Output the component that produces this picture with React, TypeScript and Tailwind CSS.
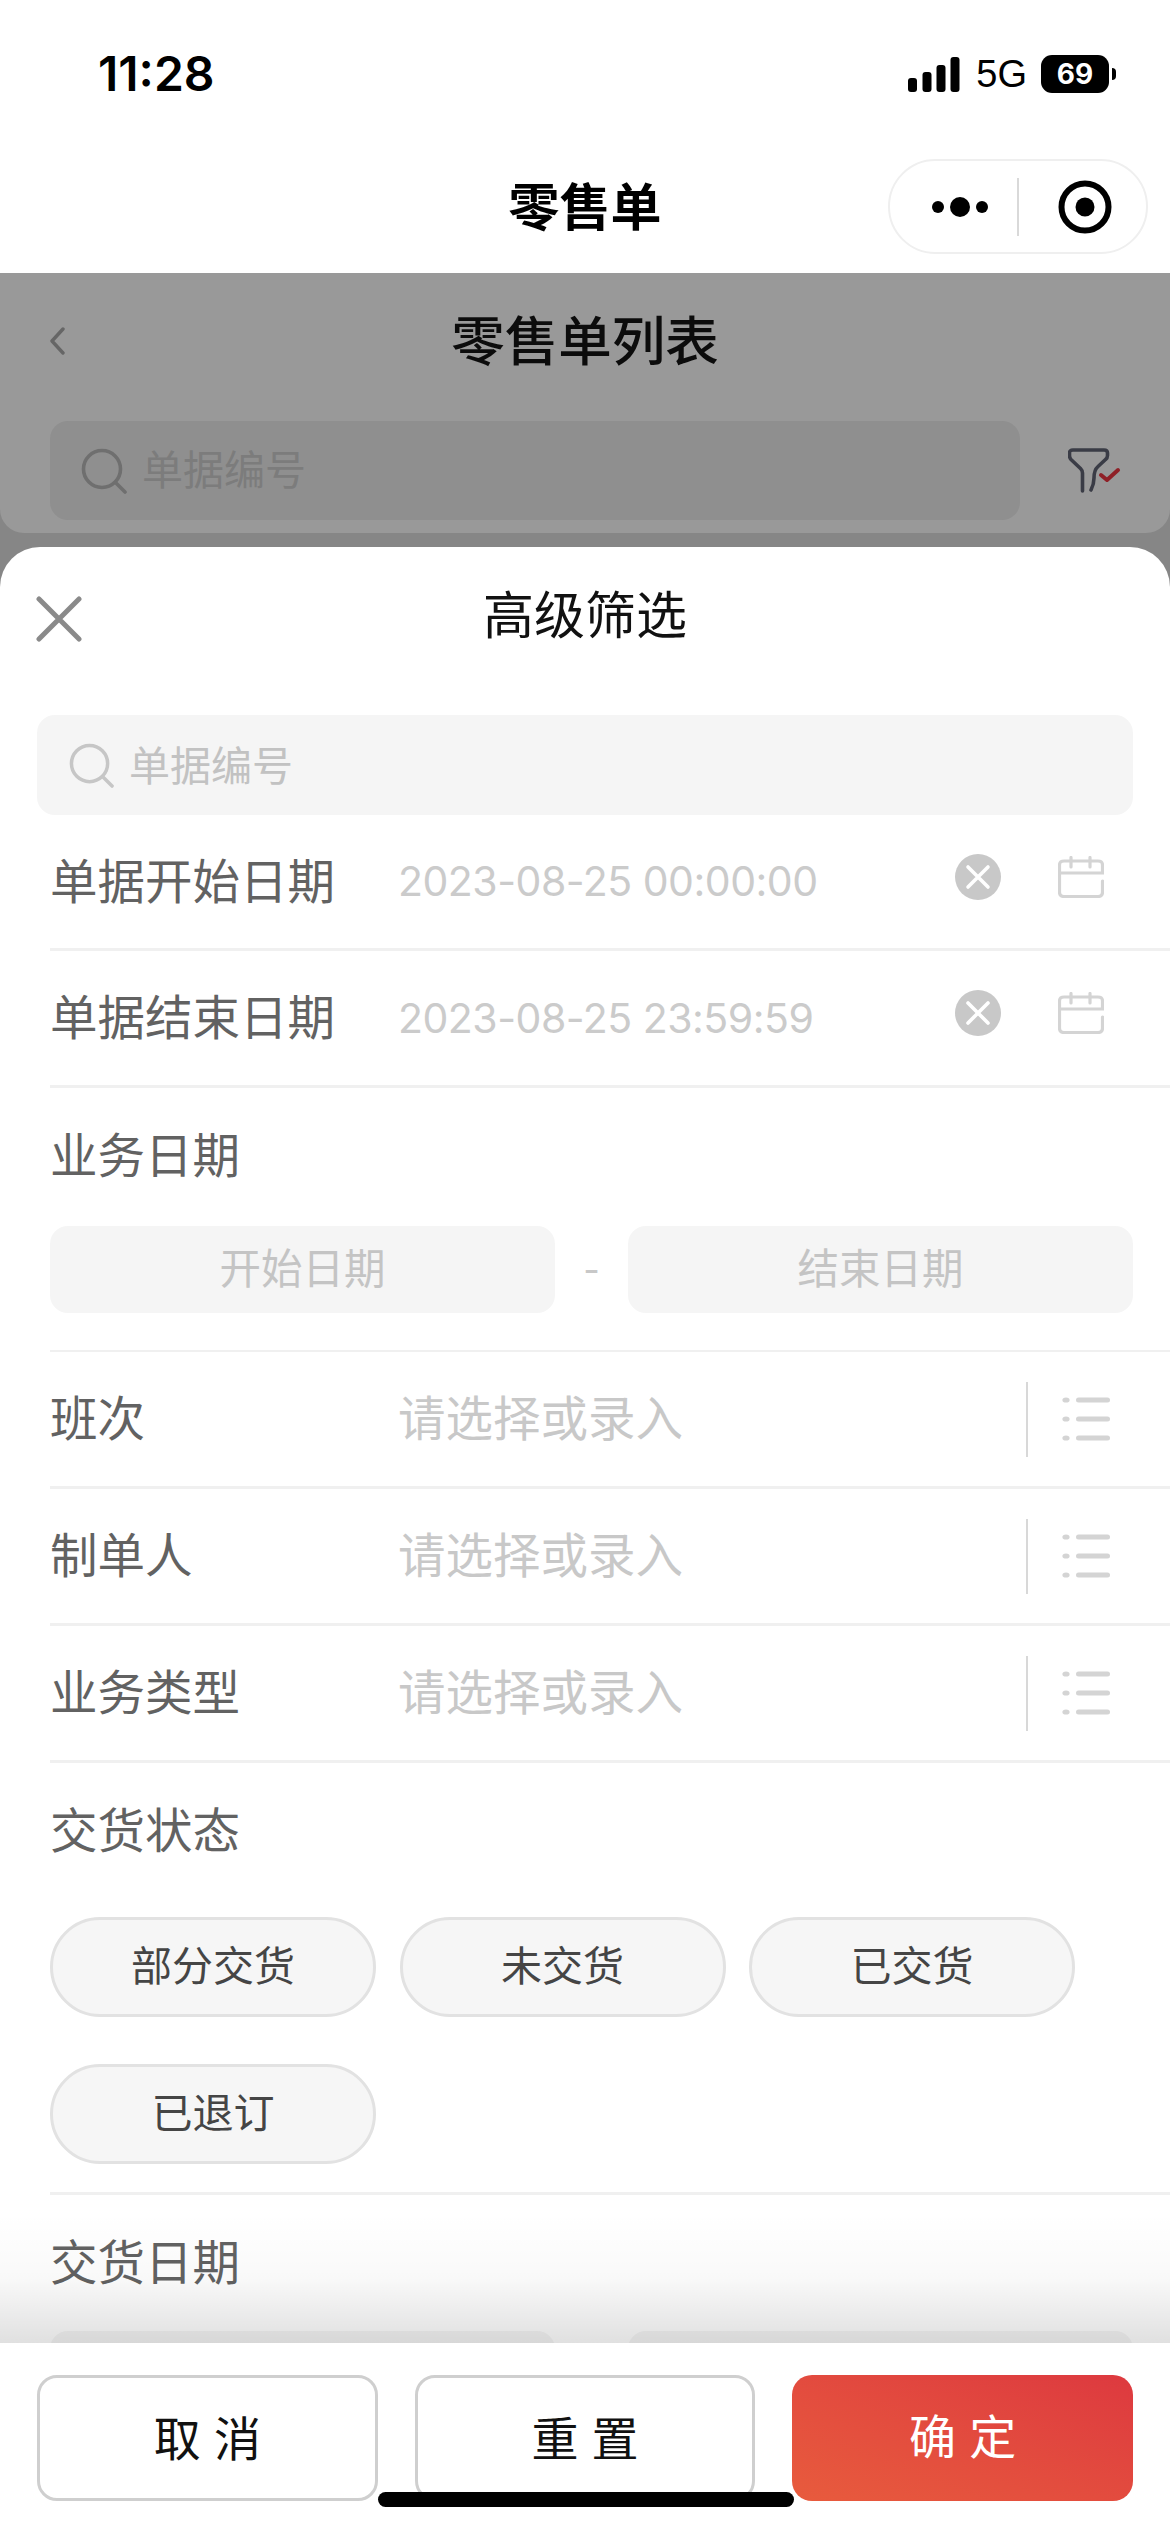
import React from 'react'

const FONT = "font-['Inter','Noto_Sans_CJK_SC','Noto_Sans',sans-serif]"

function SearchIcon({ color, size }: { color: string; size: number }) {
  return (
    <svg width={size} height={size} viewBox="0 0 46 46" fill="none" stroke={color} strokeWidth="3.6" strokeLinecap="round">
      <circle cx="21" cy="21" r="18.5" />
      <path d="M34.5 34.5 L44 44" />
    </svg>
  )
}

function ClearIcon() {
  return (
    <svg width="46" height="46" viewBox="0 0 46 46" className="mb-[10px]">
      <circle cx="23" cy="23" r="23" fill="#c8c8c8" />
      <path d="M13 13 L33 33 M33 13 L13 33" stroke="#fff" strokeWidth="3.6" strokeLinecap="round" />
    </svg>
  )
}

function CalendarIcon() {
  return (
    <svg width="46" height="42" viewBox="0 0 46 42" fill="none" stroke="#d4d4d4" strokeWidth="3.2" strokeLinecap="round" className="mb-[10px]">
      <path d="M44.5 25 V36 Q44.5 40.5 40 40.5 H6 Q1.5 40.5 1.5 36 V9 Q1.5 5 6 5 H40 Q44.5 5 44.5 9 V17 H1.5" />
      <path d="M13 1.5 V11 M32 1.5 V11" />
    </svg>
  )
}

function ListIcon() {
  return (
    <svg width="48" height="44" viewBox="0 0 48 44" fill="#d4d4d4">
      <ellipse cx="4" cy="3" rx="3.6" ry="2.6" />
      <ellipse cx="4" cy="22" rx="3.6" ry="2.6" />
      <ellipse cx="4" cy="41" rx="3.6" ry="2.6" />
      <rect x="14" y="0.5" width="34" height="5" rx="2.5" />
      <rect x="14" y="19.5" width="34" height="5" rx="2.5" />
      <rect x="14" y="38.5" width="34" height="5" rx="2.5" />
    </svg>
  )
}

function DateRow({ label, value, tall }: { label: string; value: string; tall?: boolean }) {
  return (
    <div className={`flex items-center border-b-[3px] border-[#f0f0f0] ml-[50px] pr-[66px] ${tall ? 'h-[137px]' : 'h-[136px]'}`}>
      <span className="w-[348px] text-[47.5px] leading-none text-[#626262]">{label}</span>
      <span className="flex-1 text-[41px] leading-none tracking-[-0.5px] text-[#cbcbcb]">{value}</span>
      <ClearIcon />
      <span className="ml-[57px] flex">
        <CalendarIcon />
      </span>
    </div>
  )
}

function SelectRow({ label }: { label: string }) {
  return (
    <div className="flex h-[137px] items-center border-b-[3px] border-[#f0f0f0] ml-[50px] pr-[60px]">
      <span className="w-[348px] text-[47.5px] leading-none text-[#626262]">{label}</span>
      <span className="flex-1 text-[47.5px] leading-none text-[#c8c8c8]">请选择或录入</span>
      <span className="h-[75px] w-[2px] bg-[#d8d8d8]" />
      <span className="ml-[34px] flex">
        <ListIcon />
      </span>
    </div>
  )
}

function RangeBoxes({ from, to }: { from?: string; to?: string }) {
  return (
    <div className="flex items-center justify-between pl-[50px] pr-[37px]">
      <div className="flex h-[87px] w-[505px] items-center justify-center rounded-[18px] bg-[#f5f5f5] text-[41.5px] text-[#c4c4c4]">{from}</div>
      {from && <span className="flex-1 text-center text-[36px] leading-none text-[#c8c8c8]">-</span>}
      <div className="flex h-[87px] w-[505px] items-center justify-center rounded-[18px] bg-[#f5f5f5] text-[41.5px] text-[#c4c4c4]">{to}</div>
    </div>
  )
}

function Pill({ text }: { text: string }) {
  return (
    <div className="flex h-[100px] w-[326px] items-center justify-center rounded-full border-[3px] border-[#e2e2e2] bg-[#f6f6f6] text-[41px] text-[#454545]">
      {text}
    </div>
  )
}

export default function App() {
  return (
    <div className={`flex h-[2532px] w-[1170px] flex-col overflow-hidden bg-white ${FONT}`}>
      {/* status bar */}
      <div className="flex h-[148px] items-center justify-between pl-[98px] pr-[54px]">
        <span className="text-[48px] font-semibold leading-none text-black">11:28</span>
        <div className="flex items-center">
          <svg width="52" height="35" viewBox="0 0 52 35" fill="#000">
            <rect x="0" y="21" width="9" height="14" rx="3" />
            <rect x="14.5" y="15" width="9" height="20" rx="3" />
            <rect x="28.5" y="8" width="9" height="27" rx="3" />
            <rect x="42.5" y="0" width="9" height="35" rx="3" />
          </svg>
          <span className="ml-[16px] font-['Liberation_Sans',sans-serif] text-[38px] leading-none text-black">5G</span>
          <div className="ml-[14px] flex h-[38px] w-[68px] items-center justify-center rounded-[11px] bg-black font-['Inter',sans-serif] text-[28px] font-bold leading-none text-white">69</div>
          <span className="ml-[3px] h-[12px] w-[4px] rounded-r-full bg-black" />
        </div>
      </div>

      {/* mini program nav */}
      <div className="grid h-[125px] grid-cols-[1fr_auto_1fr] items-start pt-[11px]">
        <span />
        <span className="mt-[23px] text-[51px] font-bold leading-none text-black">零售单</span>
        <div className="flex justify-end pr-[22px]">
          <div className="flex h-[95px] w-[260px] shrink-0 items-center rounded-full border-2 border-[#efefef]">
            <svg width="60" height="22" viewBox="0 0 60 22" fill="#000" className="ml-[42px]">
              <circle cx="6" cy="11" r="6" />
              <circle cx="28" cy="11" r="10" />
              <circle cx="50" cy="11" r="6" />
            </svg>
            <span className="ml-[25px] h-[58px] w-[2px] bg-[#d9d9d9]" />
            <svg width="54" height="54" viewBox="0 0 54 54" className="ml-[39px]">
              <circle cx="27" cy="27" r="23.5" fill="none" stroke="#000" strokeWidth="6" />
              <circle cx="27" cy="27" r="9.5" fill="#000" />
            </svg>
          </div>
        </div>
      </div>

      <div className="flex min-h-0 flex-1 flex-col bg-[#868686]">
        {/* dimmed page behind the sheet */}
        <div className="rounded-b-[24px] bg-[#999999] pb-[13px]">
          <div className="relative flex h-[134px] items-center justify-center pt-[4px]">
            <svg width="16" height="28" viewBox="0 0 16 28" fill="none" stroke="#666" strokeWidth="3.4" strokeLinecap="round" strokeLinejoin="round" className="absolute left-[49px] top-[54px]">
              <path d="M14 2 L3 14 L14 26" />
            </svg>
            <span className="text-[53.5px] font-medium leading-none text-[#0c0c0c]">零售单列表</span>
          </div>
          <div className="mt-[14px] flex items-center pl-[50px]">
            <div className="flex h-[99px] w-[970px] items-center rounded-[18px] bg-[#8f8f8f] pl-[31px]">
              <SearchIcon color="#6f6f6f" size={46} />
              <span className="ml-[15px] text-[41px] leading-none text-[#7c7c7c]">单据编号</span>
            </div>
            <svg width="54" height="46" viewBox="0 0 54 46" fill="none" strokeLinecap="round" strokeLinejoin="round" className="ml-[48px]">
              <path d="M14.5 43 V25 Q14.5 22.5 12.5 20.5 L3 11.5 Q1.5 10 1.5 7.5 V5 Q1.5 2 5 2 H36 Q39.5 2 39.5 5 V7.5 Q39.5 10 37.5 11.5 L30 18.5 Q26 22 26 30 Q26 36 23 42" stroke="#3a3c46" strokeWidth="3.6" />
              <path d="M33 27 L39 32 L50 22" stroke="#8f2027" strokeWidth="4" />
            </svg>
          </div>
        </div>

        {/* filter sheet */}
        <div className="mt-[14px] flex min-h-0 flex-1 flex-col overflow-hidden rounded-t-[40px] bg-white">
          <div className="relative flex h-[136px] items-center justify-center">
            <svg width="46" height="46" viewBox="0 0 46 46" stroke="#8a8a8a" strokeWidth="5" strokeLinecap="round" className="absolute left-[36px] top-[49px]">
              <path d="M3 3 L43 43 M43 3 L3 43" />
            </svg>
            <span className="text-[51px] leading-none text-[#111111]">高级筛选</span>
          </div>

          <div className="relative min-h-0 flex-1 overflow-hidden pt-[32px]">
            <div className="mx-[37px] flex h-[100px] items-center rounded-[18px] bg-[#f5f5f5] pl-[32px]">
              <SearchIcon color="#c6c6c6" size={45} />
              <span className="ml-[15px] pt-[3px] text-[41px] leading-none text-[#c2c2c2]">单据编号</span>
            </div>

            <DateRow label="单据开始日期" value="2023-08-25 00:00:00" />
            <DateRow label="单据结束日期" value="2023-08-25 23:59:59" tall />

            <div className="flex h-[136px] items-center pl-[50px] text-[47.5px] leading-none text-[#626262]">业务日期</div>
            <div className="mt-[2px]">
              <RangeBoxes from="开始日期" to="结束日期" />
            </div>
            <div className="ml-[50px] mt-[37px] border-b-2 border-[#f0f0f0]" />

            <SelectRow label="班次" />
            <SelectRow label="制单人" />
            <SelectRow label="业务类型" />

            <div className="flex h-[136px] items-center pl-[50px] text-[47.5px] leading-none text-[#626262]">交货状态</div>
            <div className="ml-[50px] mt-[18px] flex flex-wrap gap-x-[23.5px] gap-y-[47px]">
              <Pill text="部分交货" />
              <Pill text="未交货" />
              <Pill text="已交货" />
              <Pill text="已退订" />
            </div>
            <div className="ml-[50px] mt-[28px] border-b-[3px] border-[#f0f0f0]" />

            <div className="flex h-[136px] items-center pl-[50px] text-[47.5px] leading-none text-[#626262]">交货日期</div>
            <RangeBoxes />

            {/* fade above the footer */}
            <div className="absolute inset-x-0 bottom-0 h-[130px] bg-linear-to-b from-transparent via-[#00000006] to-[#0000001f]" />
          </div>

          {/* footer buttons */}
          <div className="relative flex h-[189px] gap-[37px] bg-white px-[37px] pt-[32px]">
            <button className="h-[126px] w-[341px] rounded-[20px] border-[3px] border-[#cfcfcf] pt-[3px] text-[47px] text-[#111111]">取 消</button>
            <button className="h-[126px] w-[341px] rounded-[20px] border-[3px] border-[#cfcfcf] pt-[3px] text-[47px] text-[#111111]">重 置</button>
            <button className="h-[126px] w-[341px] rounded-[20px] bg-linear-to-tr from-[#e85b3d] to-[#dd393f] pb-[1px] text-[47px] text-white">确 定</button>
            <span className="absolute bottom-[25px] left-[378px] h-[15px] w-[416px] rounded-full bg-black" />
          </div>
        </div>
      </div>
    </div>
  )
}
